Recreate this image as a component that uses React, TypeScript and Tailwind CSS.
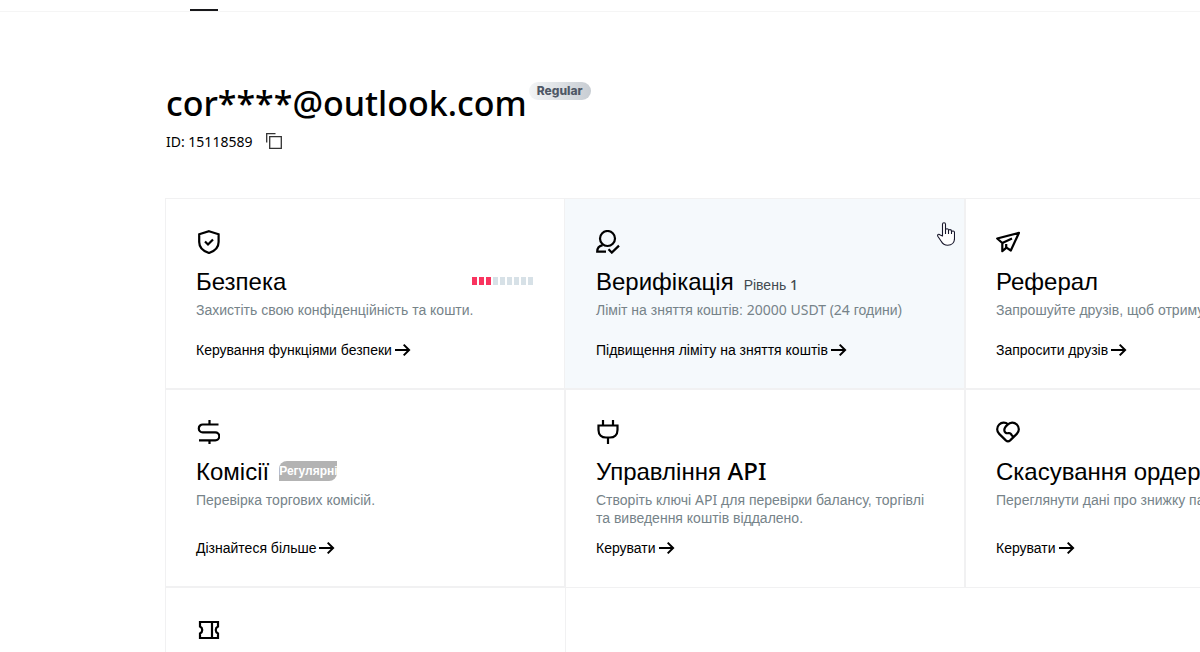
import type { ReactNode } from 'react';

const Latin = ({ children }: { children: ReactNode }) => (
  <span className="font-['Noto_Sans',sans-serif] leading-none">{children}</span>
);

const Icon = ({ children }: { children: ReactNode }) => (
  <svg viewBox="0 0 24 24" className="size-6 shrink-0" fill="none" stroke="currentColor" strokeWidth="2.2" aria-hidden="true">
    {children}
  </svg>
);

const Arrow = () => (
  <svg viewBox="0 0 16 14" className="h-3.5 w-4" fill="none" stroke="currentColor" strokeWidth="2" aria-hidden="true">
    <path d="M0 7h14M8.700 1.600 14.100 7l-5.400 5.400" />
  </svg>
);

const SecurityMeter = () => (
  <div className="mb-0.5 ml-auto flex gap-0.5 pr-0.5">
    {Array.from({ length: 9 }, (_, i) => (
      <span key={i} className={i < 3 ? 'h-2 w-[5px] bg-[#f9345f]' : 'h-2 w-[5px] bg-[#d7e1e7]'} />
    ))}
  </div>
);

type Card = {
  icon: ReactNode;
  title: ReactNode;
  extra?: ReactNode;
  text: ReactNode;
  action: string;
  active?: boolean;
};

const cards: Card[] = [
  {
    icon: (
      <Icon>
        <path d="M13 1.2 22.6 4.2V12c0 5.500-4 9.200-9.600 11C7.200 21.200 3.200 17.500 3.200 12V4.200Z" />
        <path d="m9 11.500 3 3 5-5" />
      </Icon>
    ),
    title: 'Безпека',
    extra: <SecurityMeter />,
    text: 'Захистіть свою конфіденційність та кошти.',
    action: 'Керування функціями безпеки',
  },
  {
    icon: (
      <Icon>
        <circle cx="11.500" cy="8.500" r="7.500" />
        <path d="M10 21.700H1.200c0-3.500 1.800-5.700 5.500-6.500M12.500 19.300l3.300 3.300 7.200-7" />
      </Icon>
    ),
    title: 'Верифікація',
    extra: (
      <span className="pt-1.5 text-sm text-[#424a50]">
        Рівень <span className="font-['Noto_Sans',sans-serif] leading-none font-medium">1</span>
      </span>
    ),
    text: (
      <>
        Ліміт на зняття коштів: <Latin>20000 USDT (24</Latin> години)
      </>
    ),
    action: 'Підвищення ліміту на зняття коштів',
    active: true,
  },
  {
    icon: (
      <Icon>
        <path strokeLinejoin="round" d="M1.200 8.500 23 2.800 14.800 20.500l-4.300-2.800-4.200 3.500V13Z" />
        <path d="m6.300 13 9.700-4.500M10.200 14v4" />
      </Icon>
    ),
    title: 'Реферал',
    text: 'Запрошуйте друзів, щоб отримувати комісію.',
    action: 'Запросити друзів',
  },
  {
    icon: (
      <Icon>
        <path d="M22.500 4.500H6.700a3.900 3.900 0 0 0 0 7.800h12.600a4 4 0 0 1 0 8H3M13.500 0v4.500M13.500 20.300V24" />
      </Icon>
    ),
    title: 'Комісії',
    extra: (
      <span className="mb-0.5 w-[58px] overflow-hidden rounded-tl-lg rounded-br-lg bg-[#b3b3b3] text-xs leading-5 font-bold whitespace-nowrap text-white">
        Регулярні
      </span>
    ),
    text: 'Перевірка торгових комісій.',
    action: 'Дізнайтеся більше',
  },
  {
    icon: (
      <Icon>
        <path d="M2.500 5.500h19V10c0 5-3.300 7.500-7.500 7.500h-4c-4.200 0-7.500-2.500-7.500-7.500ZM7 0v5.500M17 0v5.500M12 17.500V24" />
      </Icon>
    ),
    title: (
      <>
        Управління <span className="font-['Noto_Sans',sans-serif] leading-none font-medium">API</span>
      </>
    ),
    text: (
      <>
        Створіть ключі <Latin>API</Latin> для перевірки балансу, торгівлі та виведення коштів віддалено.
      </>
    ),
    action: 'Керувати',
  },
  {
    icon: (
      <Icon>
        <path d="M12 4.300C9.500 2 5.500 2.300 3.200 4.500c-2.700 2.700-2.700 6.700 0 9.400l6.600 6.500c1.400 1.200 3 1.200 4.400 0l6.600-6.500c2.700-2.700 2.700-6.700 0-9.400-2.700-2.600-6.700-2.500-9.200.2-2.300 2-3.300 3.400-3.300 5.300 0 2.300 1.800 3.500 3.700 3.200 1.500-.3 2.500-.3 3 .8.4 1 .8 1.800 2.200 2.500" />
      </Icon>
    ),
    title: 'Скасування ордеру',
    text: 'Переглянути дані про знижку партнерів.',
    action: 'Керувати',
  },
  {
    icon: (
      <Icon>
        <path d="M4 4h18v4.500c-3 1.500-3 5.500 0 7V20H4v-4.500c3-1.500 3-5.500 0-7ZM16 4v16" />
      </Icon>
    ),
    title: 'Купони',
    text: 'Переглянути мої купони.',
    action: 'Керувати',
  },
];

function AccountCard({ card, first, top }: { card: Card; first: boolean; top: boolean }) {
  return (
    <article
      className={`-mr-px -mb-px flex flex-col border border-[#f1f1f2] pt-[31px] pr-[30px] pb-[30px] ${
        first ? 'pl-[30px]' : '-ml-px pl-[31px]'
      } ${top ? '' : '-mt-px'} ${card.active ? 'bg-[#f5f9fc]' : ''}`}
    >
      {card.icon}
      <div className="mt-3 flex h-8 items-center gap-2.5">
        <h2 className="text-2xl leading-8 whitespace-nowrap">{card.title}</h2>
        {card.extra}
      </div>
      <p className="mt-[3px] min-h-7 text-sm leading-[18px] text-[#768389]">{card.text}</p>
      <a href="#" className="mt-auto flex items-center gap-[3px] pt-3 text-sm leading-[18px]">
        {card.action}
        <Arrow />
      </a>
    </article>
  );
}

const Pointer = () => (
  <svg viewBox="0 0 18 24" className="absolute top-[222px] left-[937px] h-6 w-[18px]" fill="#fff" stroke="#17172b" strokeWidth="1.100" strokeLinejoin="round" aria-hidden="true">
    <path d="M5.500 14V2.300C5.500.3 8.500.3 8.500 2.300V8c0-1.700 3-1.700 3 0v.8c0-1.600 3-1.500 3 .2V10c.3-1.400 3-1.300 3 .6V16.500c0 4.200-2.800 6.800-6.800 6.800-3.200 0-5-1.200-6.500-4L.8 14.200c-.7-1.700 1-2.600 2.400-1.200Z" />
    <path fill="none" d="M8.500 8v4M11.500 8.800V12M14.500 9.500V12" />
  </svg>
);

export default function App() {
  return (
    <div className="relative h-screen overflow-hidden bg-white font-['Liberation_Sans',Arial,sans-serif] text-black">
      <nav className="flex h-3 items-end border-b border-[#f5f5f5] pl-[190px]">
        <span className="h-0.5 w-7 bg-[#18181b]" />
      </nav>
      <main className="pl-[165px]">
        <header className="h-[186px] pt-[66px] pl-px font-['Noto_Sans',sans-serif]">
          <div className="flex items-start gap-0.5">
            <h1 className="text-[34px] leading-[50px] font-medium">cor****@outlook.com</h1>
            <span className="mt-1 rounded-full bg-linear-to-r from-[#f3f5f6] to-[#c8cdd3] px-2 font-['Inter',sans-serif] text-xs leading-[18px] font-extrabold text-[#4f5866]">
              Regular
            </span>
          </div>
          <div className="mt-1 flex items-center gap-3.5 text-sm leading-5">
            <span>ID: 15118589</span>
            <button type="button" aria-label="Copy ID">
              <svg viewBox="0 0 16 16" className="mb-0.5 block size-4" fill="none" stroke="#333" strokeWidth="1.300" aria-hidden="true">
                <path d="M.7 9.500V.7h8.800M3.700 3.700h11.600v11.600H3.700Z" />
              </svg>
            </button>
          </div>
        </header>
        <section className="grid grid-cols-[repeat(3,400px)]">
          {cards.map((card, i) => (
            <AccountCard key={i} card={card} first={i % 3 === 0} top={i < 3} />
          ))}
        </section>
      </main>
      <Pointer />
    </div>
  );
}
